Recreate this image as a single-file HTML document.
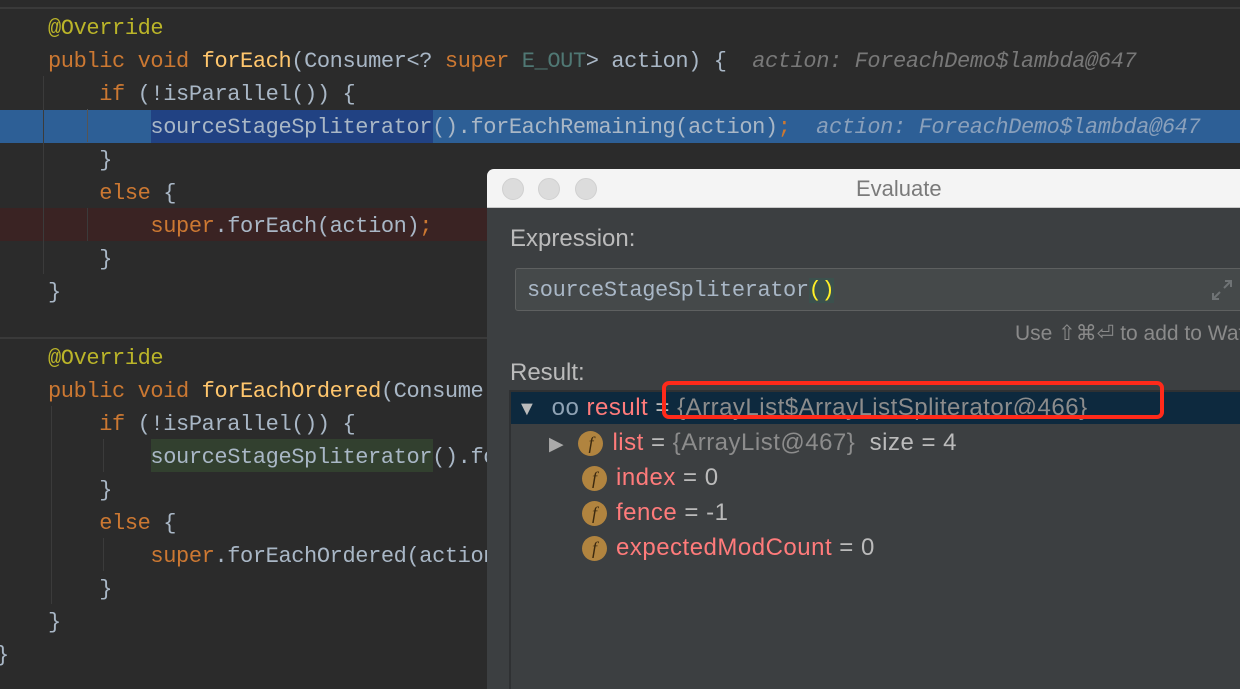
<!DOCTYPE html>
<html><head><meta charset="utf-8"><style>
*{margin:0;padding:0;box-sizing:border-box}
body{width:1240px;height:680px;overflow:hidden;background:#2b2b2b;position:relative;font-family:"Liberation Mono",monospace}
.l{position:absolute;left:48px;height:33px;line-height:37px;font-size:22px;letter-spacing:-0.4px;white-space:pre;color:#a9b7c6}
.k{color:#cc7832}.a{color:#bbb529}.f{color:#ffc66d}.t{color:#507874}.h{color:#787878;font-style:italic}
.row{position:absolute;left:0;width:1240px;height:33px}
.g{position:absolute;width:1px;background:#3b3b3b}
.sans{font-family:"Liberation Sans",sans-serif}
.ic{display:inline-block;width:25px;height:25px;border-radius:50%;background:#b1843f;color:#3c2a10;font-size:18px;text-align:center;line-height:25px;font-family:"Liberation Serif",serif;font-style:italic;vertical-align:middle;margin-right:9px;letter-spacing:0}
.tr{position:absolute;height:35px;line-height:35px;font-size:24px;letter-spacing:0.5px;color:#bbbbbb;white-space:pre;font-family:"Liberation Sans",sans-serif}
.r{color:#ff7b7b}.gr{color:#8c8c8c}
</style></head><body>
<div style="position:absolute;left:0;top:7px;width:1240px;height:2px;background:#3a3a3a"></div>
<div style="position:absolute;left:0;top:337px;width:1240px;height:2px;background:#3a3a3a"></div>
<div class="row" style="top:110px;background:#2d5f96"></div>
<div style="position:absolute;left:151px;top:110px;width:282px;height:33px;background:#214283"></div>
<div class="row" style="top:208px;background:#3a2323"></div>
<div style="position:absolute;left:151px;top:439px;width:282px;height:33px;background:#32402f"></div>
<div class="g" style="left:43px;top:76px;height:198px"></div>
<div class="g" style="left:87px;top:109px;height:33px;background:#555"></div>
<div class="g" style="left:87px;top:208px;height:33px"></div>
<div class="g" style="left:51px;top:406px;height:198px"></div>
<div class="g" style="left:103px;top:439px;height:33px"></div>
<div class="g" style="left:103px;top:538px;height:33px"></div>

<div class="l a" style="top:10px">@Override</div>
<div class="l" style="top:43px"><span class="k">public void </span><span class="f">forEach</span>(Consumer&lt;? <span class="k">super </span><span class="t">E_OUT</span>&gt; action) {  <span class="h">action: ForeachDemo$lambda@647</span></div>
<div class="l" style="top:76px">    <span class="k">if </span>(!isParallel()) {</div>
<div class="l" style="top:109px">        sourceStageSpliterator().forEachRemaining(action)<span class="k">;</span>  <span class="h" style="color:#8aa0bb">action: ForeachDemo$lambda@647</span></div>
<div class="l" style="top:142px">    }</div>
<div class="l" style="top:175px">    <span class="k">else </span>{</div>
<div class="l" style="top:208px">        <span class="k">super</span>.forEach(action)<span class="k">;</span></div>
<div class="l" style="top:241px">    }</div>
<div class="l" style="top:274px">}</div>
<div class="l a" style="top:340px">@Override</div>
<div class="l" style="top:373px"><span class="k">public void </span><span class="f">forEachOrdered</span>(Consume</div>
<div class="l" style="top:406px">    <span class="k">if </span>(!isParallel()) {</div>
<div class="l" style="top:439px">        sourceStageSpliterator().fo</div>
<div class="l" style="top:472px">    }</div>
<div class="l" style="top:505px">    <span class="k">else </span>{</div>
<div class="l" style="top:538px">        <span class="k">super</span>.forEachOrdered(action</div>
<div class="l" style="top:571px">    }</div>
<div class="l" style="top:604px">}</div>
<div class="l" style="top:637px;left:-4px">}</div>

<div style="position:absolute;left:487px;top:169px;width:760px;height:520px;background:#3c3f41;border-radius:7px 0 0 0;overflow:hidden">
 <div style="height:39px;background:#f4f4f4;border-bottom:1px solid #c8c8c8;position:relative">
  <div style="position:absolute;left:15px;top:9px;width:22px;height:22px;border-radius:50%;background:#dcdcdc;border:1px solid #d0d0d0"></div>
  <div style="position:absolute;left:51px;top:9px;width:22px;height:22px;border-radius:50%;background:#dcdcdc;border:1px solid #d0d0d0"></div>
  <div style="position:absolute;left:88px;top:9px;width:22px;height:22px;border-radius:50%;background:#dcdcdc;border:1px solid #d0d0d0"></div>
  <div class="sans" style="position:absolute;left:369px;top:0;line-height:40px;font-size:22px;color:#7a7a7a">Evaluate</div>
 </div>
 <div class="sans" style="position:absolute;left:23px;top:56px;font-size:24px;color:#bbbbbb">Expression:</div>
 <div style="position:absolute;left:28px;top:99px;width:740px;height:43px;background:#45494a;border:1px solid #5e6060;border-radius:3px">
  <div style="position:absolute;left:11px;top:0;line-height:43px;font-size:22px;letter-spacing:-0.4px;color:#a9b7c6;white-space:pre">sourceStageSpliterator<span style="color:#ffef28;background:#3b514d">()</span></div>
  <svg style="position:absolute;left:694px;top:9px" width="24" height="24" viewBox="0 0 24 24" fill="none" stroke="#6f7375" stroke-width="2"><path d="M14 10L21 3M15 3h6v6M10 14L3 21M3 15v6h6"/></svg>
 </div>
 <div class="sans" style="position:absolute;left:528px;top:152px;font-size:21px;color:#8a8a8a;white-space:nowrap">Use ⇧⌘⏎ to add to Watches</div>
 <div class="sans" style="position:absolute;left:23px;top:190px;font-size:24px;color:#bbbbbb">Result:</div>
 <div style="position:absolute;left:22px;top:221px;width:760px;height:320px;border:2px solid #2f3133;border-right:none;border-bottom:none"></div>
 <div style="position:absolute;left:24px;top:223px;width:740px;height:32px;background:#0d293e"></div>
 <div class="tr" style="left:30px;top:221px"><span style="font-size:20px">▼</span>  <span style="color:#8fa3b5">oo</span> <span class="r">result</span> = <span class="gr">{ArrayList$ArrayListSpliterator@466}</span></div>
 <div style="position:absolute;left:175px;top:212px;width:502px;height:38px;border:4px solid #ff2a1a;border-radius:7px"></div>
 <div class="tr" style="left:62px;top:256px"><span style="font-size:19px;color:#aaa">▶</span>  <span class="ic">f</span><span class="r">list</span> = <span class="gr">{ArrayList@467}</span>  size = 4</div>
 <div class="tr" style="left:95px;top:291px"><span class="ic">f</span><span class="r">index</span> = 0</div>
 <div class="tr" style="left:95px;top:326px"><span class="ic">f</span><span class="r">fence</span> = -1</div>
 <div class="tr" style="left:95px;top:361px"><span class="ic">f</span><span class="r">expectedModCount</span> = 0</div>
</div>
</body></html>
